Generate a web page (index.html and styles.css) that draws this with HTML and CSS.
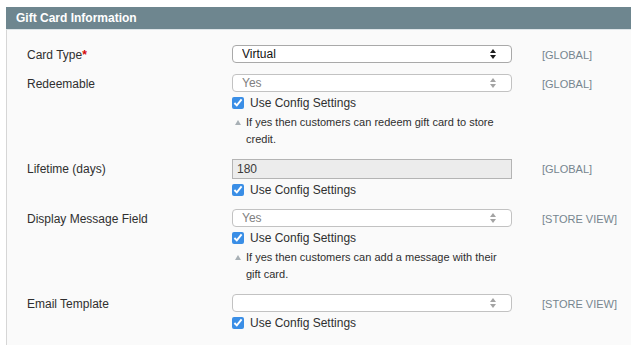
FILE: index.html
```html
<!DOCTYPE html>
<html lang="en">
<head>
    <meta charset="UTF-8">
    <title>Gift Card Information</title>
    <link rel="stylesheet" href="styles.css">
</head>
<body>

<div class="entry-edit">
    <div class="entry-edit-head">
        <h4>Gift Card Information</h4>
    </div>
    <div class="fieldset">

        <div class="form-row">
            <label class="row-label" for="cardType">Card Type<span class="required">*</span></label>
            <div class="row-value">
                <div class="select-wrap">
                    <select id="cardType" class="select">
                        <option>Virtual</option>
                        <option>Physical</option>
                        <option>Combined</option>
                    </select>
                    <span class="arrows">
                        <svg width="6" height="10" viewBox="0 0 6 10"><path d="M3 0 L6 4 L0 4 Z M0 6 L6 6 L3 10 Z"/></svg>
                    </span>
                </div>
            </div>
            <div class="row-scope">[GLOBAL]</div>
        </div>

        <div class="form-row">
            <label class="row-label" for="redeemable">Redeemable</label>
            <div class="row-value">
                <div class="select-wrap disabled">
                    <select id="redeemable" class="select" disabled>
                        <option>Yes</option>
                        <option>No</option>
                    </select>
                    <span class="arrows">
                        <svg width="6" height="10" viewBox="0 0 6 10"><path d="M3 0 L6 4 L0 4 Z M0 6 L6 6 L3 10 Z"/></svg>
                    </span>
                </div>
                <label class="use-default"><input type="checkbox" checked> Use Config Settings</label>
                <p class="note"><span class="note-icon"></span><span>If yes then customers can redeem gift card to store credit.</span></p>
            </div>
            <div class="row-scope">[GLOBAL]</div>
        </div>

        <div class="form-row">
            <label class="row-label" for="lifetime">Lifetime (days)</label>
            <div class="row-value">
                <input type="text" id="lifetime" class="input-text" value="180" disabled>
                <label class="use-default"><input type="checkbox" checked> Use Config Settings</label>
            </div>
            <div class="row-scope">[GLOBAL]</div>
        </div>

        <div class="form-row">
            <label class="row-label" for="allowMessage">Display Message Field</label>
            <div class="row-value">
                <div class="select-wrap disabled">
                    <select id="allowMessage" class="select" disabled>
                        <option>Yes</option>
                        <option>No</option>
                    </select>
                    <span class="arrows">
                        <svg width="6" height="10" viewBox="0 0 6 10"><path d="M3 0 L6 4 L0 4 Z M0 6 L6 6 L3 10 Z"/></svg>
                    </span>
                </div>
                <label class="use-default"><input type="checkbox" checked> Use Config Settings</label>
                <p class="note"><span class="note-icon"></span><span>If yes then customers can add a message with their gift card.</span></p>
            </div>
            <div class="row-scope">[STORE VIEW]</div>
        </div>

        <div class="form-row">
            <label class="row-label" for="emailTemplate">Email Template</label>
            <div class="row-value">
                <div class="select-wrap disabled">
                    <select id="emailTemplate" class="select" disabled>
                        <option></option>
                    </select>
                    <span class="arrows">
                        <svg width="6" height="10" viewBox="0 0 6 10"><path d="M3 0 L6 4 L0 4 Z M0 6 L6 6 L3 10 Z"/></svg>
                    </span>
                </div>
                <label class="use-default"><input type="checkbox" checked> Use Config Settings</label>
            </div>
            <div class="row-scope">[STORE VIEW]</div>
        </div>

    </div>
</div>

</body>
</html>
```

FILE: styles.css
```css
body {
    margin: 0;
    background: #fff;
    font-family: 'Liberation Sans', Arial, sans-serif;
    font-size: 12px;
    color: #2f2f2f;
}
.entry-edit {
    margin: 7px 0 0 6px;
    border-left: 1px solid #d6d6d6;
    background: #fafafa;
    min-height: 345px;
}
.entry-edit-head {
    background: #6e868f;
    height: 22px;
    border-bottom: 1px solid #dde4e7;
    margin-left: -1px;
}
.entry-edit-head h4 {
    margin: 0;
    padding-left: 10px;
    color: #fff;
    font-size: 12px;
    font-weight: bold;
    line-height: 22px;
}
.fieldset {
    padding: 15px 0 0 20px;
}
.form-row {
    display: grid;
    grid-template-columns: 205px 280px auto;
    margin-bottom: 11px;
}
.row-label {
    box-sizing: border-box;
    height: 18px;
    padding-top: 1px;
    line-height: 18px;
}
.required {
    color: #d40707;
    font-weight: bold;
}
.row-scope {
    box-sizing: border-box;
    height: 18px;
    padding: 1px 0 0 30px;
    font-size: 11px;
    line-height: 18px;
    color: #76858f;
}

/* select with its own arrows */
.select-wrap {
    position: relative;
    height: 18px;
}
.select {
    appearance: none;
    -webkit-appearance: none;
    display: block;
    width: 100%;
    height: 18px;
    margin: 0;
    padding: 0 0 0 9px;
    border: 1px solid #a9a9a9;
    border-radius: 4px;
    background: #fff;
    font-family: inherit;
    font-size: 12px;
    line-height: 16px;
    color: #111;
    opacity: 1;
}
.select-wrap.disabled .select {
    border-color: #c2c2c2;
    color: #808080;
}
.arrows {
    position: absolute;
    right: 16px;
    top: 4px;
    height: 10px;
    line-height: 0;
}
.arrows svg {
    fill: #1c1c1c;
}
.select-wrap.disabled .arrows svg {
    fill: #a3a3a3;
}

.input-text {
    display: block;
    box-sizing: border-box;
    width: 100%;
    height: 20px;
    margin: 0;
    padding: 0 4px;
    border: 1px solid #b4b4b4;
    background: #ececec;
    font-family: inherit;
    font-size: 12px;
    color: #3a3a3a;
}

.use-default {
    display: flex;
    align-items: center;
    gap: 6px;
    height: 16px;
    margin-top: 3px;
}
.use-default input {
    width: 12px;
    height: 12px;
    margin: 0;
    accent-color: #3a8ee6;
}

.note {
    display: flex;
    margin: 3px 0 0;
    font-size: 11px;
    line-height: 17px;
    color: #2f2f2f;
}
.note-icon {
    flex: 0 0 14px;
    display: flex;
    justify-content: center;
    padding-top: 6px;
    box-sizing: border-box;
}
.note-icon::before {
    content: "";
    border-left: 3px solid transparent;
    border-right: 3px solid transparent;
    border-bottom: 5px solid #a8b0b5;
    height: 0;
    margin-right: 2px;
}
```
